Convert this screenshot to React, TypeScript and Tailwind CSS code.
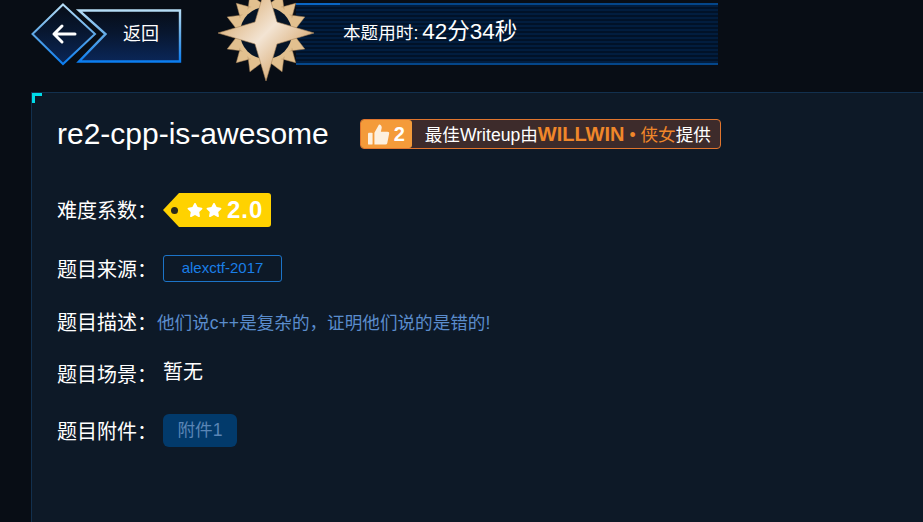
// Challenge detail page with back button, timer bar and task info rows
import React from 'react';
import { FaStar } from 'react-icons/fa';

const font = 'font-["Liberation_Sans","Noto_Sans_CJK_SC",sans-serif]';

function BackButton() {
  return (
    <div className="relative w-[152px] h-[64px] ml-[30px] mt-[2px] shrink-0">
      <svg className="absolute inset-0" width="152" height="64" viewBox="0 0 152 64" fill="none">
        <defs>
          <linearGradient id="edge" x1="0" y1="0" x2="0" y2="1">
            <stop offset="0" stopColor="#b5dcf5" />
            <stop offset="0.5" stopColor="#5ea8e6" />
            <stop offset="1" stopColor="#0b7df0" />
          </linearGradient>
          <linearGradient id="fill" x1="0" y1="0" x2="0" y2="1">
            <stop offset="0" stopColor="#070d18" />
            <stop offset="0.45" stopColor="#081730" />
            <stop offset="1" stopColor="#0a2658" />
          </linearGradient>
        </defs>
        <path d="M49 8.5H150V59.5H49L75.5 32Z" fill="url(#fill)" stroke="url(#edge)" strokeWidth="2.4" />
        <path d="M33 0.5L67 32L33 64L0 32Z" fill="#070c14" />
        <path d="M33 2.5L65 32L33 62L2.5 32Z" fill="url(#fill)" stroke="url(#edge)" strokeWidth="2" />
        <path d="M45 32H24M32 24L24 32L32 40" stroke="#fff" strokeWidth="3" strokeLinecap="round" strokeLinejoin="round" />
      </svg>
      <span className={`absolute left-[93px] top-[20px] text-[18px] leading-[24px] text-white ${font}`}>返回</span>
    </div>
  );
}

function Medal() {
  const spikes: string[] = [];
  for (let i = 0; i < 16; i++) {
    if (i % 4 === 0) continue;
    const a = (i * Math.PI) / 8;
    const r = 42;
    const x = 48 + Math.sin(a) * r;
    const y = 48 - Math.cos(a) * r;
    const bx = Math.cos(a) * 8;
    const by = Math.sin(a) * 8;
    const ix = 48 + Math.sin(a) * 28;
    const iy = 48 - Math.cos(a) * 28;
    spikes.push(`M${x} ${y}L${ix + bx} ${iy + by}L${ix - bx} ${iy - by}Z`);
  }
  return (
    <svg className="relative z-10 shrink-0 ml-[36px] -mr-[18px] -mt-[15px]" width="96" height="96" viewBox="0 0 96 96">
      <defs>
        <linearGradient id="gold" x1="0" y1="0" x2="1" y2="1">
          <stop offset="0.2" stopColor="#dcb27c" />
          <stop offset="0.5" stopColor="#f3e4d3" />
          <stop offset="0.8" stopColor="#d8ab74" />
        </linearGradient>
      </defs>
      <path d={spikes.join('')} fill="#e2c08f" stroke="#a8845a" strokeWidth="0.5" />
      <circle cx="48" cy="48" r="30" fill="#e2c08f" />
      <circle cx="48" cy="48" r="26" fill="#061426" />
      <path d="M48 0L59 37L96 48L59 59L48 96L37 59L0 48L37 37Z" fill="url(#gold)" stroke="#a8845a" strokeWidth="0.6" />
    </svg>
  );
}

function ThumbIcon() {
  return (
    <svg width="22" height="23" viewBox="0 0 24 24" fill="#fdf0df">
      <rect x="0" y="10" width="5" height="13" rx="1" />
      <path d="M7 10L12 1C14 1 15 2.500 15 4.500L14 9H21A2 2 0 0 1 23 11.500L21 21.500A2 2 0 0 1 19 23H7Z" />
    </svg>
  );
}

function TimerBar() {
  return (
    <div className="relative w-[422px] h-[62px] mt-[3px] shrink-0 flex items-center border-y-2 border-[#04468a] bg-[repeating-linear-gradient(180deg,#021d3e_0px,#021d3e_2px,#011228_2px,#011228_4px)]">
      <div className="absolute left-0 -top-[2px] w-[44px] h-[2px] bg-[#0a66c4]" />
      <div className={`ml-[47px] -mt-[5px] flex items-baseline text-white ${font}`}>
        <span className="text-[17.6px]">本题用时:</span>
        <span className="text-[22.5px] ml-[4px]">42分34秒</span>
      </div>
    </div>
  );
}

function Row({ label, className, children }: { label: string; className: string; children: React.ReactNode }) {
  return (
    <div className={`flex items-center ${className}`}>
      <span className="w-[106px] shrink-0 pt-[2px] text-[20px] leading-[26px] text-white">{label}</span>
      {children}
    </div>
  );
}

export default function App() {
  return (
    <div className={`h-[522px] overflow-hidden bg-[#080d15] ${font}`}>
      <div className="flex items-start h-[92px]">
        <BackButton />
        <Medal />
        <TimerBar />
      </div>

      <div className="relative ml-[31px] h-[430px] bg-[#0d1927] border-l border-t border-[#12304e] pl-[25px] pt-[26px]">
        <div className="absolute left-0 top-0 w-[10px] h-[10px] border-l-[3px] border-t-[3px] border-[#00dbe8]" />

        <div className="flex items-center">
          <h1 className="text-[30px] leading-[30px] text-white">re2-cpp-is-awesome</h1>
          <div className="ml-[31px] flex items-center w-[361px] h-[30px] rounded-[4px] border border-[#e0752e] bg-[#3d2b2b] text-[17.6px] text-white">
            <div className="flex items-center justify-center gap-[4px] w-[51px] h-[28px] rounded-[3px] bg-[#f49b3a]">
              <ThumbIcon />
              <span className="text-[20px] font-bold">2</span>
            </div>
            <span className="ml-[13px] whitespace-nowrap">
              最佳Writeup由<b className="text-[20px] text-[#f0872a]">WILLWIN</b>
              <span className="text-[#f0872a]"> • 侠女</span>提供
            </span>
          </div>
        </div>

        <Row label="难度系数：" className="mt-[44px]">
          <div className="relative flex items-center w-[108px] h-[34px] bg-[#ffd200] rounded-r-[3px] [clip-path:polygon(16px_0,100%_0,100%_100%,16px_100%,0_50%)] pl-[24px] gap-[3px] text-white">
            <div className="absolute left-[8px] top-[14px] w-[7px] h-[7px] rounded-full bg-[#2b2a1a]" />
            <FaStar className="text-[16px]" />
            <FaStar className="text-[16px]" />
            <span className="ml-[2px] text-[24px] font-bold tracking-[1px]">2.0</span>
          </div>
        </Row>

        <Row label="题目来源：" className="mt-[28px]">
          <div className="-mt-[2px] flex items-center justify-center w-[119px] h-[27px] pt-[1px] rounded-[3px] border border-[#1c74c8] text-[15px] text-[#1a7fe8]">alexctf-2017</div>
        </Row>

        <Row label="题目描述：" className="mt-[25px]">
          <span className="-ml-[6px] pt-[2px] text-[17.6px] leading-[26px] text-[#5a8ccc]">他们说c++是复杂的，证明他们说的是错的!</span>
        </Row>

        <Row label="题目场景：" className="mt-[24px]">
          <span className="-mt-[4px] text-[20px] leading-[26px] text-white">暂无</span>
        </Row>

        <Row label="题目附件：" className="mt-[26px]">
          <div className="flex items-center justify-center w-[74px] h-[33px] rounded-[6px] bg-[#023a6b] text-[17.6px] text-[#5a85b5]">附件1</div>
        </Row>
      </div>
    </div>
  );
}
